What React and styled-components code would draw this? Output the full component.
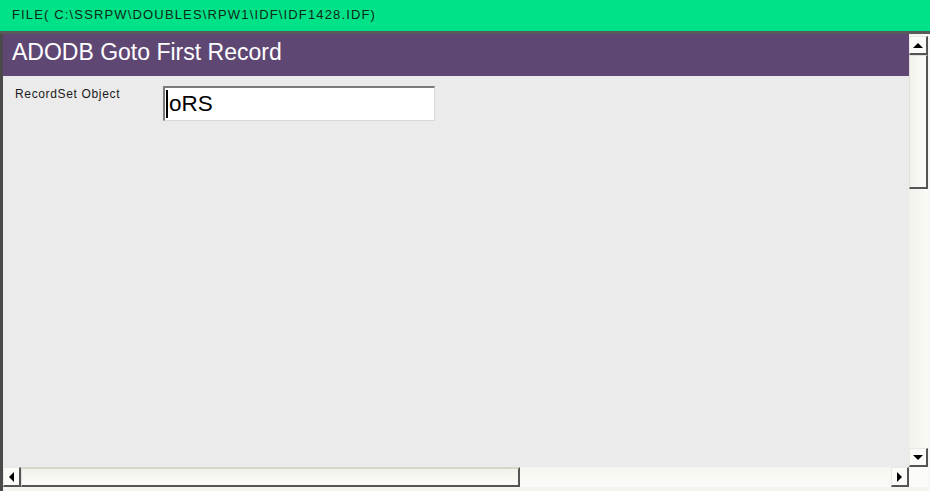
import React from "react";
import styled, { createGlobalStyle } from "styled-components";

const Global = createGlobalStyle`
  html, body { margin: 0; padding: 0; background: #ffffff; }
  body { font-family: "Liberation Sans", Arial, sans-serif; }
`;

const Window = styled.div`
  width: 930px;
  height: 491px;
  display: flex;
  flex-direction: column;
  overflow: hidden;
  background: #f4f4f0;
`;

const FileBar = styled.div`
  flex: none;
  background: #00e287;
  border-bottom: 3px solid #5a5a5a;
  display: flex;
  align-items: center;
  padding-left: 12px;
  box-sizing: border-box;
  height: 34px;
  padding-bottom: 3px;
  font-size: 13px;
  letter-spacing: 1.15px;
  color: #0f2a18;
  white-space: nowrap;
`;

const Frame = styled.div`
  flex: 1;
  display: grid;
  grid-template-columns: 906px 19px 1fr;
  grid-template-rows: 1fr 20px 4px;
  border-left: 3px solid #4a4a4a;
  min-height: 0;
`;

const Content = styled.div`
  display: flex;
  flex-direction: column;
  background: #ebebeb;
  min-height: 0;
`;

const Header = styled.div`
  height: 42px;
  flex: none;
  background: #5f4774;
  color: #ffffff;
  font-size: 23px;
  display: flex;
  align-items: center;
  padding-left: 9px;
  padding-bottom: 6px;
  box-sizing: border-box;
`;

const Body = styled.div`
  flex: 1;
  display: flex;
  align-items: flex-start;
  padding: 10px 0 0 12px;
`;

const Label = styled.div`
  width: 148px;
  font-size: 12px;
  letter-spacing: 0.65px;
  color: #1a1a1a;
  padding-top: 1px;
`;

const Field = styled.div`
  width: 272px;
  height: 35px;
  box-sizing: border-box;
  background: #ffffff;
  border-top: 2px solid #7a7a7a;
  border-left: 2px solid #7a7a7a;
  border-right: 1px solid #d8d8d8;
  border-bottom: 1px solid #d8d8d8;
  display: flex;
  align-items: center;
  padding-left: 1px;
  font-size: 22.5px;
  color: #000;
`;

const Caret = styled.span`
  display: inline-block;
  width: 2px;
  height: 28px;
  background: #000;
  margin-right: 1px;
`;

const VBar = styled.div`
  grid-column: 2;
  grid-row: 1;
  display: flex;
  flex-direction: column;
  padding-top: 2px;
  background: linear-gradient(to right, #f2f2ec, #fafaf6);
`;

const ArrowBtn = styled.div`
  width: ${(p) => p.$w || 19}px;
  height: ${(p) => p.$h || 19}px;
  flex: none;
  box-sizing: border-box;
  background: #fbfbf8;
  border-top: 1px solid #e8e8e4;
  border-left: 1px solid #e8e8e4;
  border-right: 2px solid #555;
  border-bottom: 2px solid #555;
  display: flex;
  align-items: center;
  justify-content: center;
`;

const VThumb = styled.div`
  height: 134px;
  flex: none;
  box-sizing: border-box;
  background: linear-gradient(to right, #f3f3ee, #fbfbf8);
  border-top: 1px solid #e0e0da;
  border-left: 1px solid #e0e0da;
  border-right: 2px solid #555;
  border-bottom: 2px solid #555;
`;

const Track = styled.div`
  flex: 1;
`;

const HBar = styled.div`
  grid-column: 1;
  grid-row: 2;
  display: flex;
  background: linear-gradient(to bottom, #f6f6f0, #fafaf8);
`;

const HThumb = styled.div`
  width: 499px;
  flex: none;
  box-sizing: border-box;
  background: linear-gradient(to bottom, #f2f2ea, #fbfbf8);
  border-top: 2px solid #d6d6cc;
  border-left: 1px solid #e0e0da;
  border-right: 2px solid #555;
  border-bottom: 2px solid #555;
`;

const Corner = styled.div`
  grid-column: 2;
  grid-row: 2;
  background: #fbfbf8;
`;

const Edge = styled.div`
  grid-column: 3;
  grid-row: 1 / span 3;
  background: #f7f7f4;
`;

const Tri = ({ dir }) => {
  const pts = {
    up: "0,5 5,0 10,5",
    down: "0,0 10,0 5,5",
    left: "5,0 5,10 0,5",
    right: "0,0 0,10 5,5",
  }[dir];
  const vertical = dir === "up" || dir === "down";
  return (
    <svg width={vertical ? 10 : 5} height={vertical ? 5 : 10} viewBox={vertical ? "0 0 10 5" : "0 0 5 10"}>
      <polygon points={pts} fill="#000" />
    </svg>
  );
};

export default function App() {
  return (
    <Window>
      <Global />
      <FileBar>FILE( C:\SSRPW\DOUBLES\RPW1\IDF\IDF1428.IDF)</FileBar>
      <Frame>
        <Content>
          <Header>ADODB Goto First Record</Header>
          <Body>
            <Label>RecordSet Object</Label>
            <Field>
              <Caret />
              oRS
            </Field>
          </Body>
        </Content>
        <VBar>
          <ArrowBtn>
            <Tri dir="up" />
          </ArrowBtn>
          <VThumb />
          <Track />
          <ArrowBtn>
            <Tri dir="down" />
          </ArrowBtn>
        </VBar>
        <HBar>
          <ArrowBtn $w={18} $h={20}>
            <Tri dir="left" />
          </ArrowBtn>
          <HThumb />
          <Track />
          <ArrowBtn $w={18} $h={20}>
            <Tri dir="right" />
          </ArrowBtn>
        </HBar>
        <Corner />
        <Edge />
      </Frame>
    </Window>
  );
}
